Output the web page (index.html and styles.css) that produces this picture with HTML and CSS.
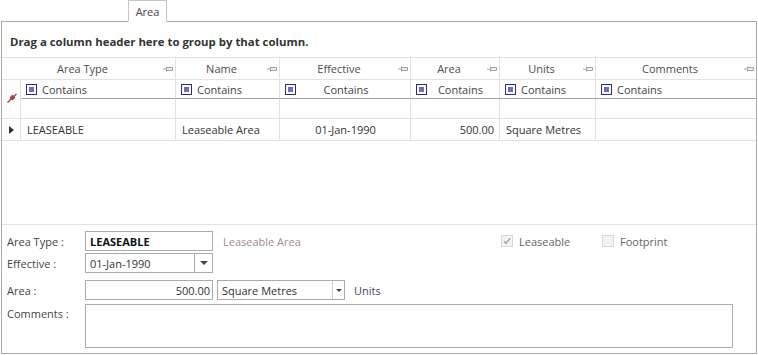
FILE: index.html
```html
<!DOCTYPE html>
<html lang="en">
<head>
  <meta charset="UTF-8" />
  <title>Area</title>
  <link rel="stylesheet" href="styles.css">
</head>
<body>

<div class="tabs">
  <div class="tab">Area</div>
</div>

<div class="panel">
  <!-- group by panel -->
  <div class="group-panel">Drag a column header here to group by that column.</div>

  <!-- grid -->
  <div class="grid">
    <div class="c head first"><span class="ht">Area Type</span><svg class="pin" width="10" height="6" viewBox="0 0 10 6"><path d="M0 3h3M3.5 0.5v5M4 1.5h5.5v3H4" stroke="#a3a3a3" fill="#eee"/></svg></div>
    <div class="c head"><span class="ht">Name</span><svg class="pin" width="10" height="6" viewBox="0 0 10 6"><path d="M0 3h3M3.5 0.5v5M4 1.5h5.5v3H4" stroke="#a3a3a3" fill="#eee"/></svg></div>
    <div class="c head"><span class="ht">Effective</span><svg class="pin" width="10" height="6" viewBox="0 0 10 6"><path d="M0 3h3M3.5 0.5v5M4 1.5h5.5v3H4" stroke="#a3a3a3" fill="#eee"/></svg></div>
    <div class="c head"><span class="ht">Area</span><svg class="pin" width="10" height="6" viewBox="0 0 10 6"><path d="M0 3h3M3.5 0.5v5M4 1.5h5.5v3H4" stroke="#a3a3a3" fill="#eee"/></svg></div>
    <div class="c head"><span class="ht">Units</span><svg class="pin" width="10" height="6" viewBox="0 0 10 6"><path d="M0 3h3M3.5 0.5v5M4 1.5h5.5v3H4" stroke="#a3a3a3" fill="#eee"/></svg></div>
    <div class="c head last"><span class="ht">Comments</span><svg class="pin" width="10" height="6" viewBox="0 0 10 6"><path d="M0 3h3M3.5 0.5v5M4 1.5h5.5v3H4" stroke="#a3a3a3" fill="#eee"/></svg></div>

    <div class="c ind filter-ind">
      <svg width="10" height="10" viewBox="0 0 10 10"><path d="M1 9.5L3.5 6L2.5 4.5L5.5 1.5L8.5 4.5L5.5 7.5L4 6.5Z" fill="#666"/><path d="M0.5 9.5L9.5 1" stroke="#e02424" stroke-width="1.2"/></svg>
    </div>
    <div class="c filter"><span class="fbox"><i></i></span><span class="ft">Contains</span></div>
    <div class="c filter"><span class="fbox"><i></i></span><span class="ft">Contains</span></div>
    <div class="c filter"><span class="fbox"><i></i></span><span class="ft center">Contains</span></div>
    <div class="c filter"><span class="fbox"><i></i></span><span class="ft right">Contains</span></div>
    <div class="c filter"><span class="fbox"><i></i></span><span class="ft">Contains</span></div>
    <div class="c filter last"><span class="fbox"><i></i></span><span class="ft">Contains</span></div>

    <div class="c"></div>
    <div class="c"></div>
    <div class="c"></div>
    <div class="c"></div>
    <div class="c"></div>
    <div class="c last"></div>

    <div class="c ind"><span class="row-arrow"></span></div>
    <div class="c data">LEASEABLE</div>
    <div class="c data">Leaseable Area</div>
    <div class="c data center">01-Jan-1990</div>
    <div class="c data right">500.00</div>
    <div class="c data">Square Metres</div>
    <div class="c data last"></div>

    <div class="grid-empty"></div>
  </div>

  <!-- detail form -->
  <div class="form">
    <div class="frow">
      <label>Area Type :</label>
      <div class="inp bold">LEASEABLE</div>
      <span class="desc">Leaseable Area</span>
      <span class="chk"><span class="box"><svg width="10" height="10" viewBox="0 0 10 10"><path d="M2 5.2L4 7.2L8 2.5" stroke="#a0a0a0" stroke-width="1.3" fill="none"/></svg></span>Leaseable</span>
      <span class="chk"><span class="box"></span>Footprint</span>
    </div>
    <div class="frow r2">
      <label>Effective :</label>
      <div class="combo date"><span class="val">01-Jan-1990</span><span class="btn"><i class="arr"></i></span></div>
    </div>
    <div class="frow r3">
      <label>Area :</label>
      <div class="inp right">500.00</div>
      <div class="combo units"><span class="val">Square Metres</span><span class="btn"><i class="arr small"></i></span></div>
      <span class="units-label">Units</span>
    </div>
    <div class="frow r4">
      <label>Comments :</label>
      <div class="memo"></div>
    </div>
  </div>
</div>

</body>
</html>
```

FILE: styles.css
```css
* {
  box-sizing: border-box;
}
html, body {
  margin: 0;
  padding: 0;
  background: #fff;
}
body {
  width: 758px;
  height: 355px;
  overflow: hidden;
  font-family: "Open Sans", "Noto Sans", sans-serif;
  font-size: 11px;
  color: #333;
}

/* tab strip */
.tabs {
  display: flex;
  align-items: flex-start;
  margin-left: 1px;
  width: 756px;
  height: 22px;
  border-bottom: 1px solid #a9a9a9;
}
.tab {
  margin-left: 127px;
  width: 39px;
  height: 22px;
  border: 1px solid #c6c6c6;
  border-bottom-color: #fff;
  background: #fff;
  display: flex;
  align-items: center;
  justify-content: center;
  color: #444;
}

.panel {
  margin-left: 1px;
  width: 756px;
  height: 332px;
  border: 1px solid #a9a9a9;
  border-top: none;
  display: flex;
  flex-direction: column;
}

.group-panel {
  height: 35px;
  padding: 3px 0 0 8px;
  display: flex;
  align-items: center;
  font-weight: bold;
  font-size: 11.4px;
  color: #333;
}

/* grid */
.grid {
  display: grid;
  grid-template-columns: 19px 155px 104px 131px 89px 96px 160px;
  grid-template-rows: 22px 19px 20px 22px 84px;
  border-top: 1px solid #e2e2e2;
}
.c {
  display: flex;
  align-items: center;
  padding: 0 5px;
  border-right: 1px solid #e2e2e2;
  border-bottom: 1px solid #e2e2e2;
  white-space: nowrap;
  overflow: hidden;
}
.c.last {
  border-right: none;
}

.head {
  padding: 0 2px 0 0;
  color: #4d4d4d;
}
.head.first {
  grid-column: span 2;
}
.ht {
  flex: 1;
  text-align: center;
}
.pin {
  flex: none;
}

.filter {
  border-bottom-color: #a3a3a3;
  color: #444;
}
.fbox {
  flex: none;
  width: 11px;
  height: 11px;
  border: 1px solid #2e2e6e;
  padding: 2px;
  margin-right: 5px;
}
.fbox i {
  display: block;
  width: 5px;
  height: 5px;
  background: #6a6ad2;
}
.ft {
  flex: 1;
}
.ft.center {
  text-align: center;
  padding-right: 14px;
}
.ft.right {
  text-align: right;
  padding-right: 11px;
}
.filter:first-of-type .fbox {
  margin-left: 2px;
}

.ind {
  padding: 0;
  justify-content: center;
}
.filter-ind {
  grid-row: span 2;
  align-items: flex-start;
  padding: 13px 0 0 2px;
}
.row-arrow {
  width: 0;
  height: 0;
  border-left: 5px solid #333;
  border-top: 4px solid transparent;
  border-bottom: 4px solid transparent;
}

.data {
  padding: 0 5px 0 6px;
  color: #333;
}
.data.center {
  justify-content: center;
}
.data.right {
  justify-content: flex-end;
}

.grid-empty {
  grid-column: 1 / -1;
  border-bottom: 1px solid #e2e2e2;
}

/* detail form */
.form {
  flex: 1;
  padding: 6px 0 0 5px;
}
.frow {
  display: flex;
  align-items: center;
  height: 20px;
}
.frow label {
  width: 78px;
  color: #444;
}
.r2 {
  margin-top: 2px;
}
.r3 {
  margin-top: 7px;
}
.r4 {
  margin-top: 4px;
  height: 44px;
  align-items: flex-start;
}
.r4 label {
  padding-top: 2px;
}

.inp {
  width: 128px;
  height: 20px;
  border: 1px solid #ababab;
  padding: 0 4px;
  display: flex;
  align-items: center;
}
.inp.bold {
  font-weight: bold;
  color: #111;
}
.inp.right {
  justify-content: flex-end;
  padding-right: 2px;
}

.desc {
  width: 278px;
  margin-left: 10px;
  color: #a5879b;
}
.chk {
  display: flex;
  align-items: center;
  width: 101px;
  color: #666;
}
.chk .box {
  width: 12px;
  height: 12px;
  margin-right: 6px;
  border: 1px solid #d8d8d8;
  background: #f2f2f2;
  display: flex;
  align-items: center;
  justify-content: center;
}

.combo {
  display: flex;
  width: 128px;
  height: 20px;
  border: 1px solid #ababab;
}
.combo .val {
  flex: 1;
  display: flex;
  align-items: center;
  padding-left: 4px;
}
.combo .btn {
  width: 18px;
  border-left: 1px solid #ababab;
  display: flex;
  align-items: center;
  justify-content: center;
}
.combo.units {
  margin-left: 4px;
}
.combo.units .btn {
  width: 12px;
  border-left-color: #cfcfcf;
}
.arr {
  width: 0;
  height: 0;
  border-top: 4px solid #444;
  border-left: 4px solid transparent;
  border-right: 4px solid transparent;
}
.arr.small {
  border-top-width: 3px;
  border-left-width: 3px;
  border-right-width: 3px;
}
.units-label {
  margin-left: 9px;
  color: #4a3f6a;
}

.memo {
  width: 648px;
  height: 44px;
  border: 1px solid #ababab;
}
```
